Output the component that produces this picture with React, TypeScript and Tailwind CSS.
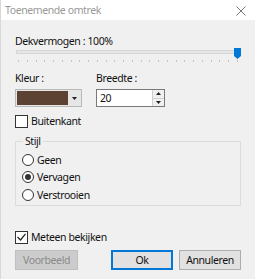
import React from "react";

const font = { fontFamily: '"Noto Sans", sans-serif' };

function Radio({ label, checked }: { label: string; checked?: boolean }) {
  return (
    <div className="flex items-center gap-[3px] h-[17.5px]">
      <span className="w-[12px] h-[12px] rounded-full border border-[#333] bg-white flex items-center justify-center">
        {checked && <span className="w-[6px] h-[6px] rounded-full bg-[#333]" />}
      </span>
      <span>{label}</span>
    </div>
  );
}

export default function App() {
  const ticks = Array.from({ length: 26 });
  return (
    <div
      className="w-[255px] h-[279px] overflow-hidden bg-[#f0f0f0] text-[10.5px] tracking-[-0.4px] leading-[14px] text-[#111] flex flex-col border-l border-[#d8d8d8]"
      style={font}
    >
      {/* titelbalk */}
      <div className="h-[20px] bg-white flex items-center justify-between pl-[4px] pr-[9px] shrink-0">
        <span className="text-[#9a9a9a] text-[10.5px]">Toenemende omtrek</span>
        <svg width="10" height="10" viewBox="0 0 10 10" className="mt-[2px]">
          <path d="M0.5 0.5 L9.5 9.5 M9.5 0.5 L0.5 9.5" stroke="#777" strokeWidth="1" />
        </svg>
      </div>

      <div className="flex flex-col pl-[14px] pr-[14px]">
        <div className="mt-[14px]">Dekvermogen : 100%</div>

        {/* slider */}
        <div className="relative mt-[0px] h-[11px]">
          <div className="absolute left-[1px] right-[2px] top-[2px] h-[4px] bg-[#e7e7e7] border border-[#d6d6d6]" />
          <svg className="absolute right-[0px] top-[0px]" width="7" height="11" viewBox="0 0 7 11">
            <path d="M0 0 H7 V8 L3.5 11 L0 8 Z" fill="#0078d7" />
          </svg>
        </div>
        <div className="flex justify-between pl-[3px] pr-[3px] h-[3px] mt-[1px]">
          {ticks.map((_, i) => (
            <span key={i} className="w-[1px] h-[2px] bg-[#c4c4c4]" />
          ))}
        </div>

        {/* kleur + breedte */}
        <div className="flex mt-[8px] gap-[14px]">
          <div className="flex flex-col">
            <span>Kleur :</span>
            <div className="mt-[4px] w-[67px] h-[18px] flex border border-[#b9b9b9] bg-[#e6e6e6] p-[1px]">
              <div className="flex-1 bg-[#5b4233]" />
              <div className="w-[12px] flex items-center justify-center">
                <svg width="5" height="3" viewBox="0 0 5 3">
                  <path d="M0 0 H5 L2.5 3 Z" fill="#222" />
                </svg>
              </div>
            </div>
          </div>
          <div className="flex flex-col">
            <span>Breedte :</span>
            <div className="mt-[4px] w-[69px] h-[18px] flex border border-[#7a7a7a] bg-white">
              <span className="flex-1 pl-[3px] leading-[16px]">20</span>
              <div className="w-[12px] flex flex-col border-l border-[#d0d0d0] bg-[#f0f0f0]">
                <div className="flex-1 flex items-center justify-center border-b border-[#d0d0d0]">
                  <svg width="5" height="3" viewBox="0 0 5 3">
                    <path d="M0 3 H5 L2.5 0 Z" fill="#222" />
                  </svg>
                </div>
                <div className="flex-1 flex items-center justify-center">
                  <svg width="5" height="3" viewBox="0 0 5 3">
                    <path d="M0 0 H5 L2.5 3 Z" fill="#222" />
                  </svg>
                </div>
              </div>
            </div>
          </div>
        </div>

        {/* buitenkant */}
        <div className="flex items-center gap-[3px] mt-[7px] h-[14px]">
          <span className="w-[13px] h-[13px] border border-[#333] bg-white" />
          <span>Buitenkant</span>
        </div>

        {/* stijl groep */}
        <div className="relative mt-[13px] border border-[#dcdcdc] h-[65px] w-[226px] pl-[6px] pt-[9px] flex flex-col">
          <span className="absolute left-[7px] top-[-8px] px-[2px] bg-[#f0f0f0]">Stijl</span>
          <Radio label="Geen" />
          <Radio label="Vervagen" checked />
          <Radio label="Verstrooien" />
        </div>

        {/* meteen bekijken */}
        <div className="flex items-center gap-[3px] mt-[24px] h-[14px]">
          <span className="w-[13px] h-[13px] border border-[#333] bg-white flex items-center justify-center">
            <svg width="9" height="8" viewBox="0 0 9 8">
              <path d="M0.5 4 L3.5 7 L8.5 0.8" fill="none" stroke="#222" strokeWidth="1.2" />
            </svg>
          </span>
          <span>Meteen bekijken</span>
        </div>

        {/* knoppen */}
        <div className="flex mt-[6px] w-[226px]">
          <button className="w-[63px] h-[20px] bg-[#cccccc] border border-[#bfbfbf] text-[#8a8a8a] leading-[18px]">
            Voorbeeld
          </button>
          <button className="ml-auto w-[62px] h-[20px] bg-[#e1e1e1] border-2 border-[#0078d7] leading-[16px]">
            Ok
          </button>
          <button className="ml-[6px] w-[62px] h-[20px] bg-[#e1e1e1] border border-[#adadad] leading-[18px]">
            Annuleren
          </button>
        </div>
      </div>
    </div>
  );
}
